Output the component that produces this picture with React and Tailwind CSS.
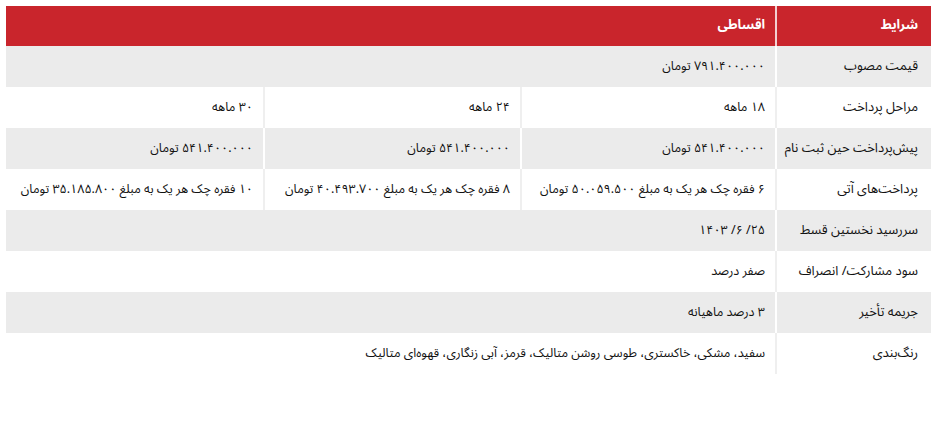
import React from "react";

const rows = [
  { label: "قیمت مصوب", cells: ["۷۹۱.۴۰۰.۰۰۰ تومان"], gray: true },
  { label: "مراحل پرداخت", cells: ["۱۸ ماهه", "۲۴ ماهه", "۳۰ ماهه"], gray: false },
  {
    label: "پیش‌پرداخت حین ثبت نام",
    cells: ["۵۴۱.۴۰۰.۰۰۰ تومان", "۵۴۱.۴۰۰.۰۰۰ تومان", "۵۴۱.۴۰۰.۰۰۰ تومان"],
    gray: true,
  },
  {
    label: "پرداخت‌های آتی",
    cells: [
      "۶ فقره چک هر یک به مبلغ ۵۰.۰۵۹.۵۰۰ تومان",
      "۸ فقره چک هر یک به مبلغ ۴۰.۴۹۳.۷۰۰ تومان",
      "۱۰ فقره چک هر یک به مبلغ ۳۵.۱۸۵.۸۰۰ تومان",
    ],
    gray: false,
  },
  { label: "سررسید نخستین قسط", cells: ["۲۵/ ۶/ ۱۴۰۳"], gray: true },
  { label: "سود مشارکت/ انصراف", cells: ["صفر درصد"], gray: false },
  { label: "جریمه تأخیر", cells: ["۳ درصد ماهیانه"], gray: true },
  {
    label: "رنگ‌بندی",
    cells: ["سفید، مشکی، خاکستری، طوسی روشن متالیک، قرمز، آبی زنگاری، قهوه‌ای متالیک"],
    gray: false,
  },
];

export default function App() {
  return (
    <div
      className="w-[933px] h-[424px] bg-white pt-[6px] pl-[6px]"
      style={{ fontFamily: '"Noto Sans Arabic", Vazirmatn, "DejaVu Sans", sans-serif' }}
    >
      <div dir="rtl" className="w-[925px] flex flex-col text-[12.5px] text-[#111]">
        <div className="grid grid-cols-[154px_253px_255px_257px] gap-x-[2px] h-[40px] bg-[#f3d0d1]">
          <div className="bg-[#c9252c] text-white text-[13px] font-bold flex items-center pr-[13px]">شرایط</div>
          <div className="col-span-3 bg-[#c9252c] text-white text-[13px] font-bold flex items-center pr-[10px]">اقساطی</div>
        </div>
        {rows.map((r, i) => (
          <div
            key={i}
            className={
              "grid grid-cols-[154px_253px_255px_257px] gap-x-[2px] h-[41px] " +
              (r.gray ? "bg-white" : "bg-[#efefef]")
            }
          >
            <div className={(r.gray ? "bg-[#ebebeb]" : "bg-white") + " flex items-center pr-[13px] text-[13px] whitespace-nowrap"}>
              {r.label}
            </div>
            {r.cells.length === 1 ? (
              <div className={(r.gray ? "bg-[#ebebeb]" : "bg-white") + " col-span-3 flex items-center pr-[10px] whitespace-nowrap"}>
                {r.cells[0]}
              </div>
            ) : (
              r.cells.map((c, j) => (
                <div key={j} className={(r.gray ? "bg-[#ebebeb]" : "bg-white") + " flex items-center pr-[10px] whitespace-nowrap"}>
                  {c}
                </div>
              ))
            )}
          </div>
        ))}
      </div>
    </div>
  );
}
